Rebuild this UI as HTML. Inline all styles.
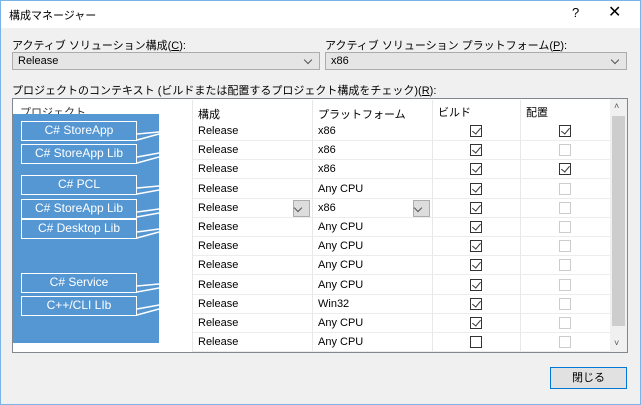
<!DOCTYPE html><html><head><meta charset="utf-8"><style>
*{box-sizing:border-box}body{margin:0;width:641px;height:405px;overflow:hidden;font-family:"Liberation Sans","Noto Sans CJK JP",sans-serif;font-size:11px;color:#000;background:#f0f0f0;position:relative}
.a{position:absolute}
.combo{position:absolute;height:18px;background:#e5e5e5;border:1px solid #acacac;padding:2px 5px;font-size:11px}
.combo:after{content:"";position:absolute;right:8px;top:4px;width:5px;height:5px;border-right:1px solid #555;border-bottom:1px solid #555;transform:rotate(45deg)}
.cb{position:absolute;width:12px;height:12px;border:1px solid #333;background:#fff}
.cb.d{border-color:#ccc}
.cb.k:after{content:"";position:absolute;left:3px;top:0px;width:4px;height:7px;border-right:1.3px solid #333;border-bottom:1.3px solid #333;transform:rotate(40deg)}
.lbl{position:absolute;left:21px;width:116px;height:20px;border:1.5px solid #fff;color:#fff;font-size:12px;text-align:center;line-height:17px;background:#5597d3}
</style></head><body>
<div class="a" style="left:0;top:0;width:641px;height:405px;border:1px solid #7ab4e6"></div>
<div class="a" style="left:1px;top:1px;width:639px;height:27px;background:#fff"></div>
<div class="a" style="left:9px;top:7px;font-size:11px">構成マネージャー</div>
<div class="a" style="left:572px;top:5px;font-size:13px">?</div>
<div class="a" style="left:608px;top:2px;font-size:16px">✕</div>
<div class="a" style="left:12px;top:37px">アクティブ ソリューション構成(<u>C</u>):</div>
<div class="a" style="left:325px;top:37px">アクティブ ソリューション プラットフォーム(<u>P</u>):</div>
<div class="combo" style="left:12px;top:52px;width:308px">Release</div>
<div class="combo" style="left:325px;top:52px;width:302px">x86</div>
<div class="a" style="left:12px;top:82px">プロジェクトのコンテキスト (ビルドまたは配置するプロジェクト構成をチェック)(<u>R</u>):</div>
<div class="a" style="left:12px;top:98px;width:616px;height:255px;background:#fff;border:1px solid #828790"></div>
<div class="a" style="left:20px;top:104px;color:#333">プロジェクト</div>
<div class="a" style="left:198px;top:106px">構成</div>
<div class="a" style="left:318px;top:106px">プラットフォーム</div>
<div class="a" style="left:438px;top:104px">ビルド</div>
<div class="a" style="left:526px;top:104px">配置</div>
<div class="a" style="left:192px;top:100px;width:1px;height:252px;background:#e8e8e8"></div>
<div class="a" style="left:312px;top:100px;width:1px;height:252px;background:#e8e8e8"></div>
<div class="a" style="left:432px;top:100px;width:1px;height:252px;background:#e8e8e8"></div>
<div class="a" style="left:520px;top:100px;width:1px;height:252px;background:#e8e8e8"></div>
<div class="a" style="left:610px;top:99px;width:17px;height:253px;background:#f0f0f0"></div>
<div class="a" style="left:612px;top:116px;width:13px;height:210px;background:#cdcdcd"></div>
<div class="a" style="left:614px;top:101px;font-size:9px;color:#555">˄</div>
<div class="a" style="left:614px;top:338px;font-size:9px;color:#555">˅</div>
<div id="rows"></div>
<script>
var p=["x86","x86","x86","Any CPU","x86","Any CPU","Any CPU","Any CPU","Any CPU","Win32","Any CPU","Any CPU"];
var dep=[1,0,1,0,0,0,0,0,0,0,0,0];var h="";
for(var i=0;i<12;i++){var y=123+i*19.2;
h+='<div class="a" style="left:193px;top:'+(y+17)+'px;width:417px;height:1px;background:#ececec"></div>';
h+='<div class="a" style="left:198px;top:'+(y+2)+'px">Release</div>';
h+='<div class="a" style="left:318px;top:'+(y+2)+'px">'+p[i]+'</div>';
h+='<div class="cb'+(i<11?' k':'')+'" style="left:470px;top:'+(y+2)+'px"></div>';
h+='<div class="cb '+(dep[i]?'k':'d')+'" style="left:559px;top:'+(y+2)+'px"></div>';}
document.getElementById('rows').innerHTML=h;
</script>
<div class="combo" style="left:293px;top:200px;width:17px;height:17px;background:#ddd"></div>
<div class="combo" style="left:413px;top:200px;width:17px;height:17px;background:#ddd"></div>
<div class="a" style="left:13px;top:114px;width:146px;height:229px;background:#5597d3"></div>
<svg class="a" style="left:0;top:0" width="641" height="405"><g stroke="#fff" stroke-width="1.5" fill="none">
<path d="M137 134 L159 132 M137 140 L159 134"/>
<path d="M137 157 L159 153 M137 163 L159 157"/>
<path d="M137 188 L159 186 M137 194 L159 190"/>
<path d="M137 212 L159 209 M137 217 L159 213"/>
<path d="M137 232 L159 229 M137 238 L159 232"/>
<path d="M137 286 L159 284 M137 292 L159 288"/>
<path d="M137 309 L159 305 M137 315 L159 309"/>
</g></svg>
<div class="lbl" style="top:121px">C# StoreApp</div>
<div class="lbl" style="top:144px">C# StoreApp Lib</div>
<div class="lbl" style="top:175px">C# PCL</div>
<div class="lbl" style="top:199px">C# StoreApp Lib</div>
<div class="lbl" style="top:219px">C# Desktop Lib</div>
<div class="lbl" style="top:273px">C# Service</div>
<div class="lbl" style="top:296px">C++/CLI LIb</div>
<div class="a" style="left:550px;top:367px;width:77px;height:22px;background:#e1e1e1;border:1px solid #0078d7;text-align:center;line-height:20px">閉じる</div>
</body></html>
